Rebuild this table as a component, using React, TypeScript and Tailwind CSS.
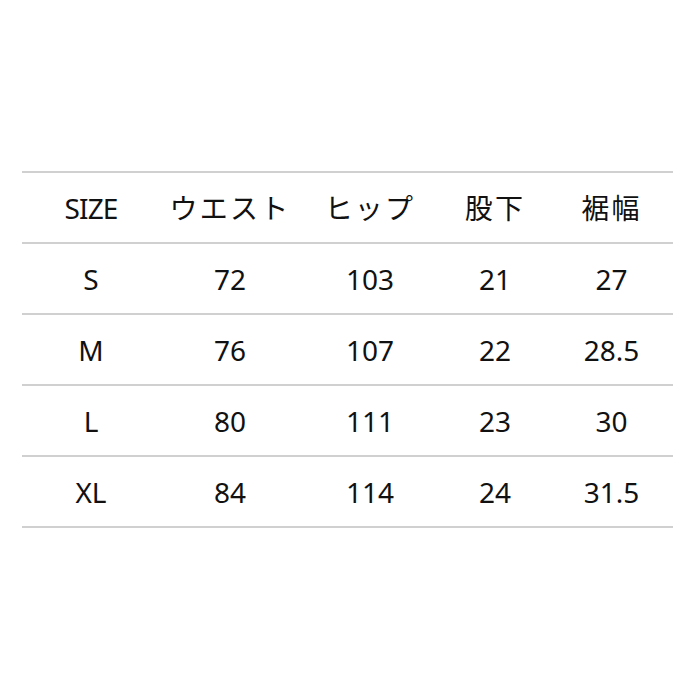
import React from "react";

const header = ["SIZE", "ウエスト", "ヒップ", "股下", "裾幅"];
const rows = [
  ["S", "72", "103", "21", "27"],
  ["M", "76", "107", "22", "28.5"],
  ["L", "80", "111", "23", "30"],
  ["XL", "84", "114", "24", "31.5"],
];

const cols = "grid grid-cols-[138px_140px_140px_110px_123px]";

export default function App() {
  return (
    <div className="w-[700px] h-[700px] bg-white pt-[171px] px-[22px] text-[#111] font-['Noto_Sans','Noto_Sans_CJK_JP',sans-serif]">
      <div className="w-[651px] border-t-2 border-[#d0d0d0]">
        <div className={`${cols} h-[71px] items-center border-b-2 border-[#d0d0d0] text-[28px]`}>
          {header.map((h, i) => (
            <span key={i} className={`text-center ${i > 0 ? "tracking-[0.08em]" : "tracking-[-0.03em]"}`}>
              {h}
            </span>
          ))}
        </div>
        {rows.map((r) => (
          <div key={r[0]} className={`${cols} h-[71px] items-center border-b-2 border-[#d0d0d0] text-[28px]`}>
            {r.map((c, i) => (
              <span key={i} className="text-center">
                {c}
              </span>
            ))}
          </div>
        ))}
      </div>
    </div>
  );
}
